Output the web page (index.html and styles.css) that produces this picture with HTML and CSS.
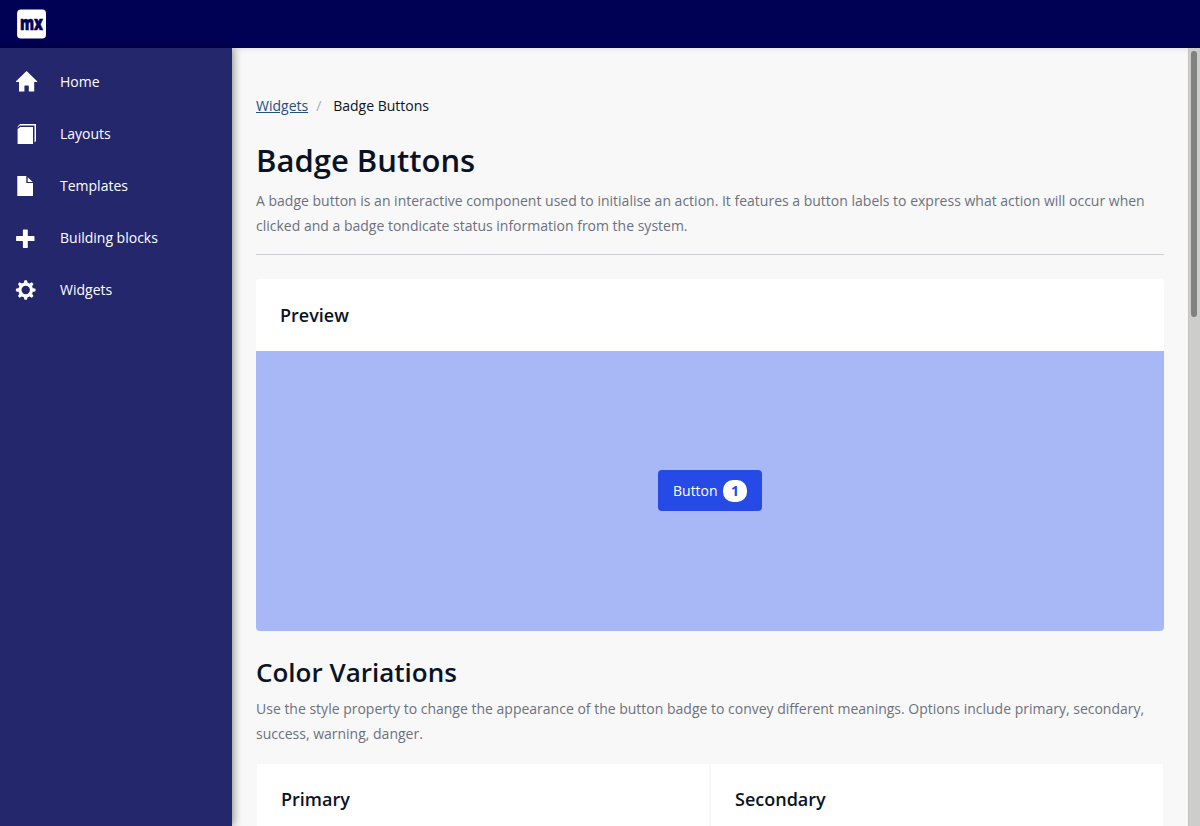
FILE: index.html
```html
<!DOCTYPE html>
<html lang="en">
<head>
<meta charset="utf-8">
<title>Badge Buttons</title>
<link rel="stylesheet" href="styles.css">
</head>
<body>
<header class="topbar">
  <svg class="logo" viewBox="0 0 30 30" role="img" aria-label="mx">
    <rect x=".1" y=".5" width="28.9" height="29" rx="3.8" fill="#fff"/>
    <text class="logo-text" x="3" y="20.7" textLength="23" lengthAdjust="spacingAndGlyphs">mx</text>
  </svg>
</header>
<div class="shell">
  <nav class="sidebar">
    <a class="nav-item"><svg class="icon" viewBox="0 0 22 22"><path d="M11.6 1 1 11.3V12H4V21.5H9.4V16.3Q9.4 15.6 10.1 15.6H13.1Q13.8 15.6 13.8 16.3V21.5H19.2V12H22.2V11.3Z"/></svg><span>Home</span></a>
    <a class="nav-item"><svg class="icon" viewBox="0 0 22 22"><path d="M2.6 7 5.2 4.9H18V22H2.6Z"/><path d="M2.6 5.4V4.6L5 2H21V19L19.5 20.4V3.5H4.7Z"/></svg><span>Layouts</span></a>
    <a class="nav-item"><svg class="icon" viewBox="0 0 22 22"><path d="M2.3 2H11.3V9H18V22H2.3ZM12.7 3.3 17.7 8H12.7Z"/></svg><span>Templates</span></a>
    <a class="nav-item"><svg class="icon" viewBox="0 0 22 22"><path d="M8.5 3.4H12.2Q12.8 3.4 12.8 4V10.1H18.9Q19.5 10.1 19.5 10.7V14.4Q19.5 15 18.9 15H12.8V21.3Q12.8 21.9 12.2 21.9H8.5Q7.9 21.9 7.9 21.3V15H1.7Q1.1 15 1.1 14.4V10.7Q1.1 10.1 1.7 10.1H7.9V4Q7.9 3.4 8.5 3.4Z"/></svg><span>Building blocks</span></a>
    <a class="nav-item"><svg class="icon" viewBox="0 0 22 22"><g transform="translate(10.7 12)"><circle r="5.8" fill="none" stroke="#fff" stroke-width="3.2"/><g id="teeth"><path id="tooth" d="M-2-6.8-1.2-9.8H1.2L2-6.8Z"/><use href="#tooth" transform="rotate(45)"/><use href="#tooth" transform="rotate(90)"/><use href="#tooth" transform="rotate(135)"/></g><use href="#teeth" transform="rotate(180)"/></g></svg><span>Widgets</span></a>
  </nav>
  <main class="content">
    <div class="breadcrumb"><a class="crumb-link">Widgets</a><span class="crumb-sep">/</span><span class="crumb-current">Badge Buttons</span></div>
    <h1 class="title">Badge Buttons</h1>
    <p class="lead">A badge button is an interactive component used to initialise an action. It features a button labels to express what action will occur when clicked and a badge tondicate status information from the system.</p>
    <section class="preview">
      <h3 class="card-title">Preview</h3>
      <div class="stage"><button class="btn">Button<span class="badge">1</span></button></div>
    </section>
    <h2 class="subtitle">Color Variations</h2>
    <p class="lead-sub">Use the style property to change the appearance of the button badge to convey different meanings. Options include primary, secondary, success, warning, danger.</p>
    <div class="variations">
      <section class="variation"><h3 class="card-title">Primary</h3></section>
      <section class="variation"><h3 class="card-title">Secondary</h3></section>
    </div>
  </main>
  <div class="scrollbar"><div class="thumb"></div></div>
</div>
</body>
</html>
```
FILE: styles.css
```css
* { box-sizing: border-box; }
body {
  margin: 0;
  height: 826px;
  overflow: hidden;
  display: flex;
  flex-direction: column;
  font-family: "Open Sans", sans-serif;
  font-size: 14px;
  color: #0a1326;
  background: #f8f8f8;
}
.topbar {
  flex: none;
  height: 48px;
  padding: 9px 17px;
  background: #000055;
}
.logo { display: block; width: 30px; height: 30px; overflow: visible; }
.logo-text {
  font-size: 19px;
  font-weight: 800;
  fill: #000055;
  stroke: #000055;
  stroke-width: .6px;
}
.shell { flex: 1; min-height: 0; display: flex; }
.sidebar {
  flex: none;
  width: 232px;
  padding-top: 8px;
  background: #24276c;
  box-shadow: 2px 0 8px rgba(0, 0, 0, .4);
}
.nav-item {
  height: 52px;
  padding-left: 15px;
  display: flex;
  align-items: center;
  gap: 23px;
  color: #fff;
}
.nav-item span { line-height: 20px; }
.icon { width: 22px; height: 22px; fill: #fff; margin-top: -2px; overflow: visible; }
.content {
  flex: 1;
  padding: 48px 24px 0;
  overflow: hidden;
  box-shadow: inset 0 4px 4px -2px rgba(0, 0, 0, .08);
}
.breadcrumb { display: flex; line-height: 20px; }
.crumb-link { color: #264f83; text-decoration: underline; }
.crumb-sep { width: 25px; padding-left: 8px; color: #a9acb3; }
.title {
  margin: 24px 0 8px;
  font-size: 31px;
  line-height: 40px;
  font-weight: 600;
}
.lead, .lead-sub { margin: 0; line-height: 25px; color: #6c717e; }
.lead { padding-bottom: 16px; border-bottom: 1px solid #ced0d3; }
.preview { margin-top: 24px; border-radius: 4px; background: #fff; overflow: hidden; }
.card-title { margin: 0; padding: 24px; font-size: 18px; line-height: 24px; font-weight: 600; }
.stage {
  height: 280px;
  padding-bottom: 1px;
  display: flex;
  align-items: center;
  justify-content: center;
  background: #a8b7f6;
}
.btn {
  width: 104px;
  height: 41px;
  padding: 0 15px;
  border: 0;
  border-radius: 4px;
  display: flex;
  align-items: center;
  justify-content: space-between;
  font: 14px "Open Sans", sans-serif;
  color: #fff;
  background: #264ae5;
}
.badge {
  width: 24px;
  height: 22px;
  border-radius: 10px;
  text-align: center;
  line-height: 22px;
  font-weight: 700;
  color: #264ae5;
  background: #fff;
}
.subtitle { margin: 24px 0 7px; font-size: 26px; line-height: 34px; font-weight: 600; }
.variations { display: flex; gap: 2px; margin: 18px 1px 0; }
.variation { flex: 1; height: 300px; background: #fff; }
.variation .card-title { padding-top: 23px; }
.scrollbar {
  flex: none;
  width: 12px;
  padding: 3px 3px 0 2px;
  border-left: 1px solid #c4c3bd;
  background: #cdcdcd;
}
.thumb { width: 6px; height: 266px; border-radius: 3px; background: #7f8281; }
```
